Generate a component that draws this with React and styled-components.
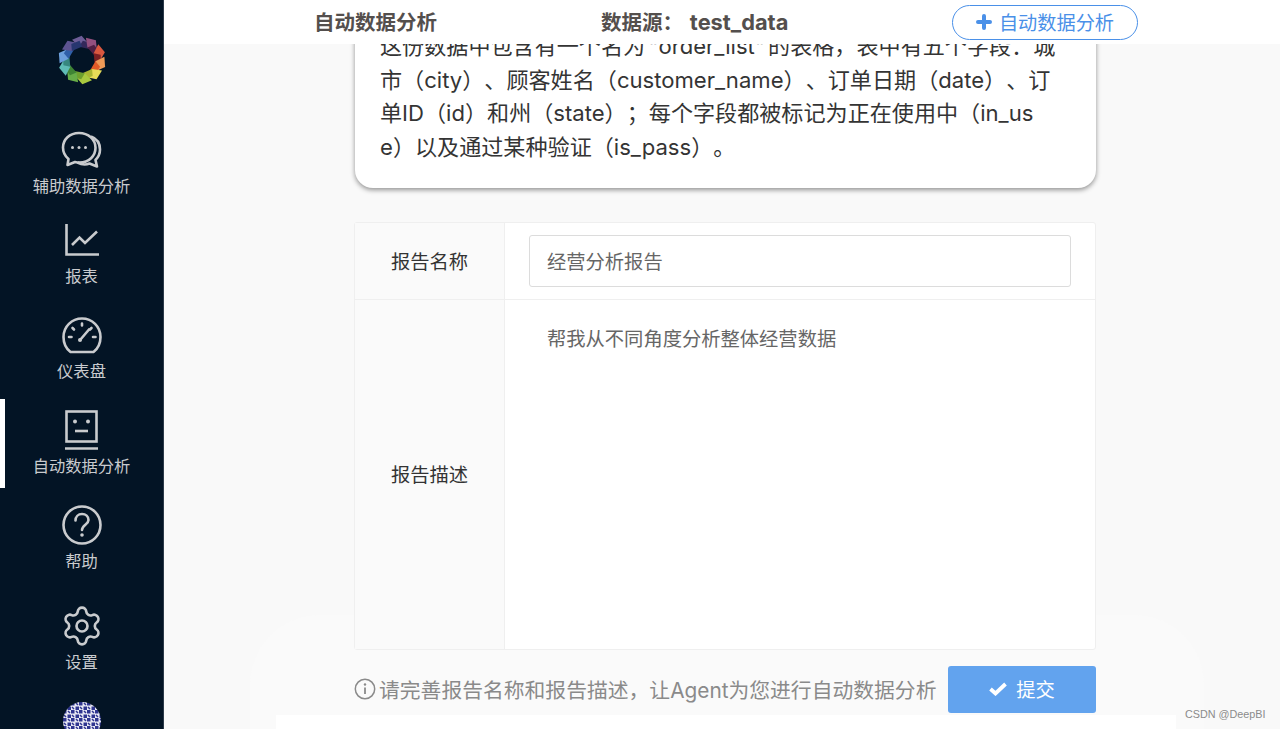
import React from "react"
import styled, { createGlobalStyle } from "styled-components"
import { Settings } from "lucide-react"

const GlobalStyle = createGlobalStyle`
  html, body {
    margin: 0;
    height: 100%;
    overflow: hidden;
    background: #f9f9f9;
    font-family: Inter, "Noto Sans CJK SC", sans-serif;
    text-spacing-trim: space-all;
  }
`

const Page = styled.div`
  display: flex;
  width: 1280px;
  height: 729px;
  overflow: hidden;
`

const Sidebar = styled.aside`
  flex: 0 0 164px;
  height: 729px;
  overflow: hidden;
  background: #031425;
  border-right: 1px solid #2c3a49;
  box-sizing: border-box;
`

const LogoBox = styled.div`
  height: 119px;
  padding-top: 35px;
  box-sizing: border-box;
  display: flex;
  justify-content: center;
`

const NavItem = styled.div`
  position: relative;
  height: 89px;
  margin-top: ${(p) => p.$gap || 0}px;
  padding-top: 11px;
  box-sizing: border-box;
  display: flex;
  flex-direction: column;
  align-items: center;
  color: #c9cbce;
  ${(p) =>
    p.$active &&
    `&::before {
      content: "";
      position: absolute;
      left: 0;
      top: 0;
      bottom: 0;
      width: 5px;
      background: #fff;
    }`}
`

const IconBox = styled.div`
  height: 40px;
  display: flex;
  align-items: center;
  justify-content: center;
`

const NavLabel = styled.div`
  margin-top: 4px;
  font-size: 16.3px;
  line-height: 24px;
  white-space: nowrap;
`

const Avatar = styled.div`
  width: 38px;
  height: 38px;
  margin: 18px auto 0;
  border-radius: 50%;
  overflow: hidden;
`

const Main = styled.main`
  position: relative;
  flex: 1;
  height: 729px;
  display: flex;
  flex-direction: column;
  overflow: hidden;
`

const BackGlow = styled.div`
  position: absolute;
  left: 86px;
  right: 76px;
  top: 615px;
  height: 200px;
  border-radius: 70px;
  background: #fafafa;
`

const BottomStrip = styled.div`
  position: absolute;
  left: 112px;
  width: 900px;
  top: 715px;
  height: 14px;
  background: #fff;
`

const Header = styled.header`
  position: relative;
  z-index: 2;
  flex: 0 0 44px;
  display: flex;
  align-items: center;
  padding-left: 150px;
  background: #fff;
  color: #544f4d;
  font-size: 20.5px;
  font-weight: 700;
`

const HeaderTitle = styled.div`
  width: 287px;
  margin-bottom: 3px;
`

const HeaderSource = styled.div`
  width: 351px;
  margin-bottom: 3px;
  white-space: nowrap;
`

const SourceName = styled.span`
  margin-left: 2px;
  font-size: 21.8px;
`

const OutlineButton = styled.div`
  width: 186px;
  height: 35px;
  margin-top: 1px;
  padding-bottom: 1px;
  box-sizing: border-box;
  display: flex;
  align-items: center;
  justify-content: center;
  gap: 7px;
  border: 1.5px solid #4a90e8;
  border-radius: 18px;
  background: #fff;
  color: #4a90e8;
  font-size: 19.2px;
  font-weight: 400;
`

const Content = styled.div`
  position: relative;
  z-index: 1;
  width: 742px;
  margin-left: 190px;
`

const Card = styled.div`
  margin: -30px 0 0 1px;
  padding: 16px 25px 24px;
  border-radius: 18px;
  background: #fff;
  box-shadow: 0 2px 5px rgba(0, 0, 0, 0.42);
  color: #343434;
  font-size: 22.1px;
  line-height: 33.5px;
  white-space: nowrap;
`

const Quoted = styled.span`
  padding: 0 3px;
`

const Table = styled.div`
  margin-top: 34px;
  border: 1px solid #efefef;
  border-radius: 3px;
  background: #fff;
`

const Row = styled.div`
  display: flex;
  height: ${(p) => p.$height}px;
  & + & {
    border-top: 1px solid #efefef;
  }
`

const RowLabel = styled.div`
  flex: 0 0 150px;
  display: flex;
  align-items: center;
  justify-content: center;
  padding-bottom: 1px;
  box-sizing: border-box;
  background: #fafafa;
  border-right: 1px solid #efefef;
  color: #333;
  font-size: 19.3px;
`

const RowBody = styled.div`
  flex: 1;
  padding: ${(p) => p.$padding};
  color: #666;
  font-size: 19.3px;
`

const InputBox = styled.div`
  height: 52px;
  padding: 0 0 1px 17px;
  box-sizing: border-box;
  display: flex;
  align-items: center;
  border: 1px solid #dcdcdc;
  border-radius: 3px;
`

const Footer = styled.div`
  margin-top: 16px;
  display: flex;
  align-items: center;
  justify-content: space-between;
`

const Hint = styled.div`
  display: flex;
  align-items: center;
  gap: 3px;
  margin-top: -2px;
  color: #8a8a8a;
  font-size: 20.8px;
  white-space: nowrap;
`

const SubmitButton = styled.div`
  width: 148px;
  height: 47px;
  padding-bottom: 2px;
  box-sizing: border-box;
  display: flex;
  align-items: center;
  justify-content: center;
  gap: 9px;
  border-radius: 3px;
  background: #62a3ee;
  color: #fff;
  font-size: 19.3px;
`

const Watermark = styled.div`
  position: absolute;
  z-index: 3;
  left: 1021px;
  top: 707px;
  color: #8b8b8b;
  font-family: "Liberation Sans", sans-serif;
  font-size: 10.8px;
  line-height: 15px;
  white-space: nowrap;
`

const petals = [
  ["#6d5d97", "#33285a"],
  ["#93507f", "#4f1f45"],
  ["#d9573f", "#7c1f22"],
  ["#ef9a57", "#e25b27"],
  ["#e6dc58", "#a9b532"],
  ["#a9c93f", "#6d9f2e"],
  ["#67ad48", "#3f8434"],
  ["#5fbcb6", "#37877f"],
  ["#6c9fdc", "#2f5fa8"],
  ["#5c5391", "#27366f"],
]

const Logo = () => (
  <svg width="50" height="50" viewBox="-25 -25 50 50">
    {petals.map(([light, dark], i) => (
      <g key={i} transform={`rotate(${i * 36 - 8})`}>
        <path d="M-7 -21.500 L3 -24 L9 -15 L-1 -13.500 Z" fill={light} />
        <path d="M-1 -13.500 L3.500 -19 L11.500 -15.500 L9.500 -9.500 Z" fill={dark} />
      </g>
    ))}
  </svg>
)

const ChatIcon = () => (
  <svg width="42" height="38" viewBox="0 0 42 38" fill="none" stroke="currentColor" strokeWidth="2.6" strokeLinejoin="round">
    <path d="M18 2C8.500 2 2 8.500 2 16.500c0 5 2.500 9 5.500 11.500L6.500 34l7.500-3c1.500.4 3 .6 4.500.6C28 31.600 34.500 25 34.500 16.800 34.500 8.500 27.500 2 18 2Z" />
    <path d="M30 5.500c5.500 2 9 6.500 9 13 0 4.500-2 8-4.500 10.500l1.500 6.500-7.500-3c-3 1.200-8 1.200-12-1" />
    <circle cx="11.500" cy="16.500" r="1.500" fill="currentColor" stroke="none" />
    <circle cx="18" cy="16.500" r="1.500" fill="currentColor" stroke="none" />
    <circle cx="24.500" cy="16.500" r="1.500" fill="currentColor" stroke="none" />
  </svg>
)

const ChartIcon = () => (
  <svg width="34" height="32" viewBox="0 0 34 32" fill="none" stroke="currentColor" strokeWidth="2.6">
    <path d="M1.500 0V30.500H34" />
    <path d="M7 21L14.500 13.500L20 19L32 7.500" />
  </svg>
)

const GaugeIcon = () => (
  <svg width="40" height="37" viewBox="0 0 40 37" fill="none" stroke="currentColor" strokeWidth="2.6" strokeLinecap="round">
    <path d="M8.500 35C4 31.500 1.500 26 1.500 20 1.500 9.500 9.800 1.500 20 1.500S38.500 9.500 38.500 20c0 6-2.500 11.500-7 15Z" strokeLinejoin="round" />
    <path d="M20 6.500V8.500M7 20H9.500M31 20H33.500M10.500 11L12 12.500M29.500 11L28 12.500" />
    <path d="M18.500 22.500L27 12.500" />
    <circle cx="18" cy="23" r="2" fill="currentColor" stroke="none" />
  </svg>
)

const RobotIcon = () => (
  <svg width="33" height="40" viewBox="0 0 33 40" fill="none" stroke="currentColor" strokeWidth="2.6">
    <rect x="1.500" y="1.500" width="30" height="30" />
    <path d="M0 38.500H33" />
    <path d="M10 21H23" />
    <circle cx="10" cy="11.500" r="2" fill="currentColor" stroke="none" />
    <circle cx="23" cy="11.500" r="2" fill="currentColor" stroke="none" />
  </svg>
)

const QuestionIcon = () => (
  <svg width="40" height="40" viewBox="0 0 40 40" fill="none" stroke="currentColor" strokeWidth="2.6" strokeLinecap="round">
    <circle cx="20" cy="20" r="18.500" />
    <path d="M13.500 15.500c0-3.800 2.800-6.500 6.500-6.500s6.500 2.500 6.500 6c0 4.500-6.500 5-6.500 10" />
    <circle cx="20" cy="30" r="1.800" fill="currentColor" stroke="none" />
  </svg>
)

const InfoIcon = () => (
  <svg width="22" height="22" viewBox="0 0 22 22" fill="none" stroke="#8a8a8a" strokeWidth="1.500">
    <circle cx="11" cy="11" r="9.700" />
    <path d="M11 9.500V16" strokeWidth="1.800" />
    <circle cx="11" cy="6.500" r="1.200" fill="#8a8a8a" stroke="none" />
  </svg>
)

const PlusIcon = () => (
  <svg width="16" height="16" viewBox="0 0 16 16" fill="none" stroke="#4a90e8" strokeWidth="4" strokeLinecap="round">
    <path d="M8 2V14M2 8H14" />
  </svg>
)

const CheckIcon = () => (
  <svg width="18" height="14" viewBox="0 0 18 14" fill="none" stroke="#fff" strokeWidth="3.800">
    <path d="M1.500 7L6.500 11.500L16.500 2" />
  </svg>
)

const AvatarArt = () => (
  <svg width="38" height="38" viewBox="0 0 38 38">
    <defs>
      <pattern id="weave" width="8" height="8" patternUnits="userSpaceOnUse">
        <rect width="8" height="8" fill="#e9e9f4" />
        <path d="M0 0H3.500V3.500H0ZM4.500 4.500H8V8H4.500Z" fill="#2f3590" />
        <path d="M5 1L7 3M1 5L3 7" stroke="#2f3590" strokeWidth="1.500" />
      </pattern>
    </defs>
    <rect width="38" height="38" fill="url(#weave)" />
  </svg>
)

const navItems = [
  { label: "辅助数据分析", icon: <ChatIcon />, gap: 0 },
  { label: "报表", icon: <ChartIcon />, gap: 1 },
  { label: "仪表盘", icon: <GaugeIcon />, gap: 6 },
  { label: "自动数据分析", icon: <RobotIcon />, gap: 6, active: true },
  { label: "帮助", icon: <QuestionIcon />, gap: 6 },
  { label: "设置", icon: <Settings size={44} strokeWidth={1.450} />, gap: 12 },
]

const App = () => {
  return (
    <Page>
      <GlobalStyle />
      <Sidebar>
        <LogoBox>
          <Logo />
        </LogoBox>
        {navItems.map((item) => (
          <NavItem key={item.label} $gap={item.gap} $active={item.active}>
            <IconBox>{item.icon}</IconBox>
            <NavLabel>{item.label}</NavLabel>
          </NavItem>
        ))}
        <Avatar>
          <AvatarArt />
        </Avatar>
      </Sidebar>
      <Main>
        <BackGlow />
        <BottomStrip />
        <Header>
          <HeaderTitle>自动数据分析</HeaderTitle>
          <HeaderSource>
            数据源： <SourceName>test_data</SourceName>
          </HeaderSource>
          <OutlineButton>
            <PlusIcon />
            自动数据分析
          </OutlineButton>
        </Header>
        <Content>
          <Card>
            这份数据中包含有一个名为<Quoted>"order_list"</Quoted>的表格，表中有五个字段：城
            <br />
            市（city）、顾客姓名（customer_name）、订单日期（date）、订
            <br />
            单ID（id）和州（state）；每个字段都被标记为正在使用中（in_us
            <br />
            e）以及通过某种验证（is_pass）。
          </Card>
          <Table>
            <Row $height={76}>
              <RowLabel>报告名称</RowLabel>
              <RowBody $padding="12px 24px">
                <InputBox>经营分析报告</InputBox>
              </RowBody>
            </Row>
            <Row $height={349}>
              <RowLabel>报告描述</RowLabel>
              <RowBody $padding="24px 42px">帮我从不同角度分析整体经营数据</RowBody>
            </Row>
          </Table>
          <Footer>
            <Hint>
              <InfoIcon />
              请完善报告名称和报告描述，让Agent为您进行自动数据分析
            </Hint>
            <SubmitButton>
              <CheckIcon />
              提交
            </SubmitButton>
          </Footer>
        </Content>
        <Watermark>CSDN @DeepBI</Watermark>
      </Main>
    </Page>
  )
}

export default App
